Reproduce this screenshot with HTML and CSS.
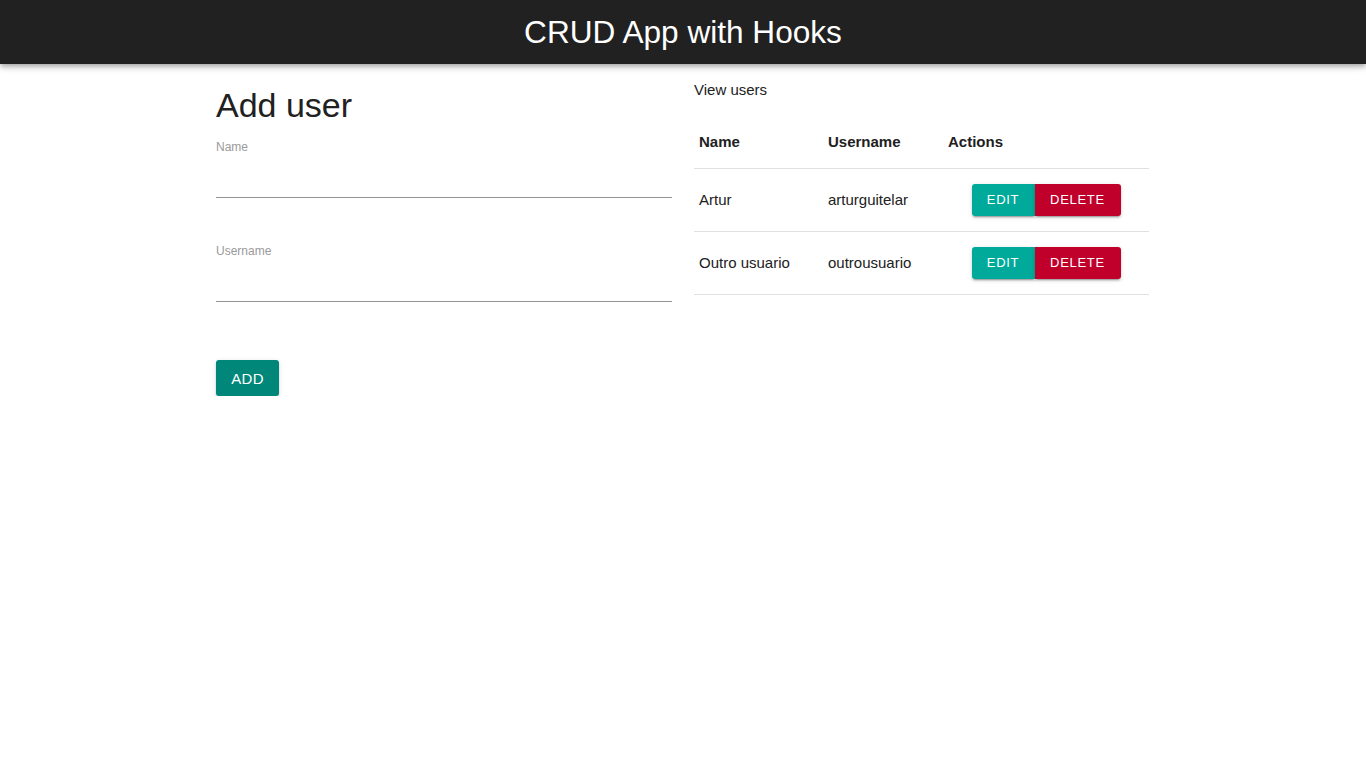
FILE: index.html
```html
<!DOCTYPE html>
<html lang="en">
<head>
<meta charset="utf-8">
<title>CRUD App with Hooks</title>
<link rel="stylesheet" href="styles.css">
</head>
<body>
<header class="appbar"><h1 class="appbar-title">CRUD App with Hooks</h1></header>
<main class="container">
  <section class="col col-form">
    <h2 class="page-title">Add user</h2>
    <form class="form">
      <label class="field">
        <span class="field-label">Name</span>
        <input class="field-input" type="text">
      </label>
      <label class="field">
        <span class="field-label">Username</span>
        <input class="field-input" type="text">
      </label>
      <button type="button" class="btn btn-add">Add</button>
    </form>
  </section>
  <section class="col col-table">
    <p class="section-title">View users</p>
    <table class="users">
      <thead>
        <tr><th class="c-name">Name</th><th class="c-user">Username</th><th class="c-act">Actions</th></tr>
      </thead>
      <tbody>
        <tr>
          <td>Artur</td><td>arturguitelar</td>
          <td class="actions"><button class="btn btn-edit">Edit</button><button class="btn btn-delete">Delete</button></td>
        </tr>
        <tr>
          <td>Outro usuario</td><td>outrousuario</td>
          <td class="actions"><button class="btn btn-edit">Edit</button><button class="btn btn-delete">Delete</button></td>
        </tr>
      </tbody>
    </table>
  </section>
</main>
</body>
</html>
```

FILE: styles.css
```css
* { box-sizing: border-box; }
html, body { margin: 0; padding: 0; background: #fff; }
body {
  font-family: "Liberation Sans", Arial, sans-serif;
  color: #212121;
}
.appbar {
  height: 64px;
  background: #212121;
  display: flex;
  align-items: center;
  justify-content: center;
  padding-top: 1px;
  box-shadow: 0 2px 4px -1px rgba(0,0,0,0.2), 0 4px 5px 0 rgba(0,0,0,0.14), 0 1px 10px 0 rgba(0,0,0,0.12);
}
.appbar-title {
  margin: 0;
  color: #fff;
  font-weight: 400;
  font-size: 31.6px;
  line-height: 1;
}
.container {
  width: 934px;
  margin: 0 auto;
  display: flex;
  gap: 22px;
}
.col { flex: 0 0 auto; }
.col-form { width: 456px; }
.col-table { width: 455px; }

.page-title {
  margin: 21px 0 0;
  font-size: 34px;
  font-weight: 400;
  line-height: 40px;
  color: #212121;
}
.form { display: flex; flex-direction: column; align-items: flex-start; }
.field {
  display: flex;
  flex-direction: column;
  width: 100%;
  margin-top: 15px;
}
.field + .field { margin-top: 46px; }
.field-label {
  font-size: 12px;
  line-height: 14px;
  color: #9a9a9a;
}
.field-input {
  border: 0;
  border-bottom: 1px solid #949494;
  height: 44px;
  padding: 0;
  outline: none;
  font: inherit;
  background: transparent;
}
.btn {
  border: 0;
  border-radius: 3px;
  font-family: "Liberation Sans", Arial, sans-serif;
  text-transform: uppercase;
  color: #fff;
  cursor: pointer;
  box-shadow: 0 3px 1px -2px rgba(0,0,0,0.2), 0 2px 2px 0 rgba(0,0,0,0.14), 0 1px 5px 0 rgba(0,0,0,0.12);
}
.btn-add {
  margin-top: 58px;
  width: 63px;
  height: 36px;
  background: #00877a;
  font-size: 15px;
  letter-spacing: 0.3px;
}
.section-title {
  margin: 17px 0 0;
  font-size: 15px;
  line-height: 18px;
  color: #212121;
}
.users {
  margin-top: 16px;
  width: 100%;
  border-collapse: collapse;
  font-size: 15px;
}
.users th {
  text-align: left;
  font-weight: 700;
  padding: 0 5px;
  height: 53px;
  border-bottom: 1px solid #e0e0e0;
}
.users td {
  padding: 0 5px;
  height: 63px;
  border-bottom: 1px solid #e0e0e0;
}
.c-name { width: 129px; }
.c-user { width: 120px; }
.users td.actions { text-align: center; font-size: 0; }
.btn-edit, .btn-delete {
  height: 32px;
  font-size: 13px;
  letter-spacing: 0.7px;
  vertical-align: middle;
}
.btn-edit { width: 63px; background: #00aa9a; border-radius: 3px 0 0 3px; }
.btn-delete { width: 86px; background: #c0002b; border-radius: 0 3px 3px 0; }
```
